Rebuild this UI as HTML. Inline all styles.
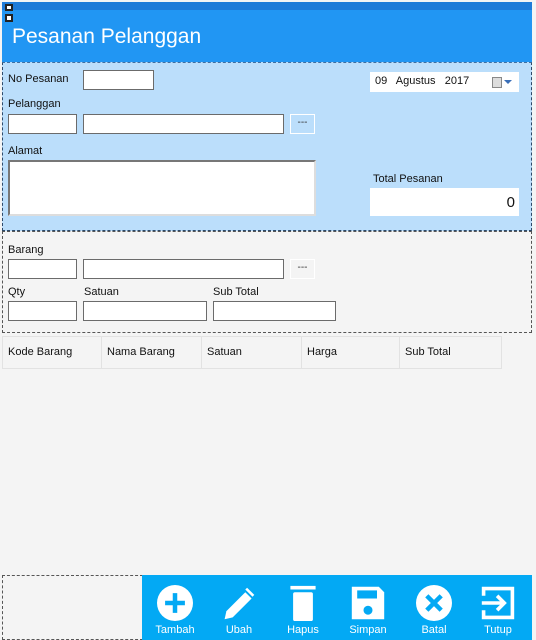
<!DOCTYPE html>
<html><head><style>
*{margin:0;padding:0;box-sizing:border-box}
body{width:536px;height:640px;background:#f4f4f4;position:relative;overflow:hidden;font-family:"Liberation Sans",sans-serif;font-size:11px;color:#111}
.a{position:absolute}
.tb{position:absolute;background:#fff;border:1px solid #6b6b6b}
.lb{position:absolute;font-size:11px}
.btn{position:absolute;border:1px solid #fff;color:#333;text-align:center;font-size:10px;line-height:16px}
.dash{position:absolute;border:1px dashed #555}
.bi{position:absolute;top:10px;width:50px;text-align:center;color:#fff;font-size:11px}
.bi svg{display:block;margin:0 auto}
.bi div{margin-top:3px;line-height:12px}
</style></head><body>
<div class="a" style="left:2px;top:2px;width:530px;height:9px;background:#1e7bd8"></div>
<div class="a" style="left:2px;top:10px;width:530px;height:52px;background:#2196f3"></div>
<div class="a" style="left:5px;top:4px;width:8px;height:7px;border:2px solid #222;background:#fff"></div>
<div class="a" style="left:5px;top:14px;width:8px;height:8px;border:2px solid #222;background:#fff"></div>
<div class="a" style="left:12px;top:25px;color:#fff;font-size:21px">Pesanan Pelanggan</div>
<div class="a" style="left:2px;top:62px;width:530px;height:169px;background:#bbdefb;border:1px dashed #2d4a6a;border-top:1px dashed #3e6ea0"></div>
<div class="lb" style="left:8px;top:73px">No Pesanan</div>
<div class="tb" style="left:83px;top:70px;width:71px;height:20px"></div>
<div class="a" style="left:370px;top:72px;width:149px;height:20px;background:#fff;padding:3px 0 0 5px;font-size:11px">09&nbsp;&nbsp; Agustus &nbsp; 2017</div>
<div class="a" style="left:492px;top:77px;width:10px;height:11px;border:1px solid #888;background:#ddd"></div>
<div class="a" style="left:504px;top:80px;width:0;height:0;border-left:4px solid transparent;border-right:4px solid transparent;border-top:4px solid #3a6fb8"></div>
<div class="lb" style="left:8px;top:98px">Pelanggan</div>
<div class="tb" style="left:8px;top:114px;width:69px;height:20px"></div>
<div class="tb" style="left:83px;top:114px;width:201px;height:20px"></div>
<div class="btn" style="left:290px;top:114px;width:25px;height:20px">---</div>
<div class="lb" style="left:8px;top:145px">Alamat</div>
<div class="tb" style="left:8px;top:160px;width:308px;height:56px;border:2px solid #777;border-right-color:#ddd;border-bottom-color:#ddd"></div>
<div class="lb" style="left:373px;top:173px">Total Pesanan</div>
<div class="a" style="left:370px;top:188px;width:149px;height:28px;background:#fff;text-align:right;padding:6px 4px 0 0;font-size:15px">0</div>
<div class="dash" style="left:2px;top:231px;width:530px;height:102px"></div>
<div class="lb" style="left:8px;top:244px">Barang</div>
<div class="tb" style="left:8px;top:259px;width:69px;height:20px"></div>
<div class="tb" style="left:83px;top:259px;width:201px;height:20px"></div>
<div class="btn" style="left:290px;top:259px;width:25px;height:20px">---</div>
<div class="lb" style="left:8px;top:286px">Qty</div>
<div class="lb" style="left:84px;top:286px">Satuan</div>
<div class="lb" style="left:213px;top:286px">Sub Total</div>
<div class="tb" style="left:8px;top:301px;width:69px;height:20px"></div>
<div class="tb" style="left:83px;top:301px;width:124px;height:20px"></div>
<div class="tb" style="left:213px;top:301px;width:123px;height:20px"></div>
<div class="a" style="left:2px;top:336px;width:500px;height:33px;border:1px solid #e2e2e2;background:#f4f4f4"></div>
<div class="a" style="left:101px;top:336px;width:1px;height:33px;background:#e2e2e2"></div>
<div class="a" style="left:201px;top:336px;width:1px;height:33px;background:#e2e2e2"></div>
<div class="a" style="left:301px;top:336px;width:1px;height:33px;background:#e2e2e2"></div>
<div class="a" style="left:399px;top:336px;width:1px;height:33px;background:#e2e2e2"></div>
<div class="lb" style="left:8px;top:346px">Kode Barang</div>
<div class="lb" style="left:107px;top:346px">Nama Barang</div>
<div class="lb" style="left:207px;top:346px">Satuan</div>
<div class="lb" style="left:307px;top:346px">Harga</div>
<div class="lb" style="left:405px;top:346px">Sub Total</div>
<div class="dash" style="left:2px;top:575px;width:141px;height:65px"></div>
<div class="a" style="left:142px;top:575px;width:390px;height:65px;background:#03a9f4">
 <div class="bi" style="left:8px"><svg width="36" height="36" viewBox="0 0 40 40"><circle cx="20" cy="20" r="20" fill="#fff"/><path d="M20 9v22M9 20h22" stroke="#03a9f4" stroke-width="5"/></svg><div>Tambah</div></div>
 <div class="bi" style="left:72px"><svg width="36" height="36" viewBox="0 0 40 40"><path d="M4 38l2-9 21-21 7 7-21 21z" fill="#fff"/><path d="M29 3l8 8-2 2-8-8z" fill="#fff"/></svg><div>Ubah</div></div>
 <div class="bi" style="left:136px"><svg width="36" height="36" viewBox="0 0 40 40"><rect x="6" y="1" width="28" height="4" fill="#fff"/><rect x="9" y="8" width="22" height="32" rx="2" fill="#fff"/></svg><div>Hapus</div></div>
 <div class="bi" style="left:201px"><svg width="36" height="36" viewBox="0 0 40 40"><path d="M2 2h30l6 6v30H2z" fill="#fff"/><rect x="8" y="6" width="22" height="9" fill="#03a9f4"/><circle cx="20" cy="28" r="5" fill="#03a9f4"/></svg><div>Simpan</div></div>
 <div class="bi" style="left:267px"><svg width="36" height="36" viewBox="0 0 40 40"><circle cx="20" cy="20" r="20" fill="#fff"/><path d="M12 12l16 16M28 12L12 28" stroke="#03a9f4" stroke-width="5"/></svg><div>Batal</div></div>
 <div class="bi" style="left:331px"><svg width="36" height="36" viewBox="0 0 40 40"><path d="M4 12V4h32v32H4v-8" fill="none" stroke="#fff" stroke-width="4"/><path d="M2 20h24M19 12l8 8-8 8" fill="none" stroke="#fff" stroke-width="4"/></svg><div>Tutup</div></div>
</div>
</body></html>
